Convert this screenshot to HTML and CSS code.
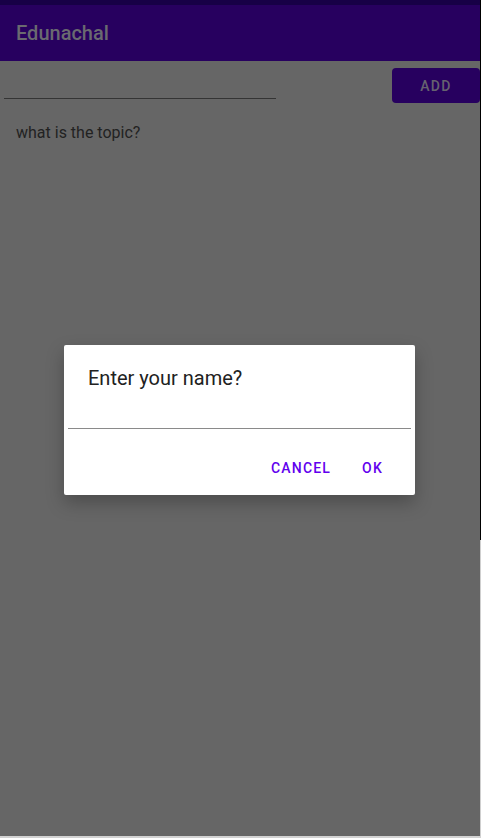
FILE: index.html
```html
<!DOCTYPE html>
<html>
<head>
<meta charset="utf-8">
<link rel="stylesheet" href="styles.css">
</head>
<body>
<div class="frame">
  <div class="screen">
    <div class="statusbar"></div>
    <div class="appbar"><span class="title">Edunachal</span></div>
    <div class="content">
      <div class="row">
        <div class="input"></div>
        <div class="addbtn">ADD</div>
      </div>
      <div class="question">what is the topic?</div>
    </div>
    <div class="dialog">
      <div class="dlg-title">Enter your name?</div>
      <div class="dlg-input"></div>
      <div class="dlg-actions">
        <span class="dlg-btn">CANCEL</span>
        <span class="dlg-btn">OK</span>
      </div>
    </div>
  </div>
  <div class="edge"></div>
</div>
<div class="bottom"></div>
</body>
</html>
```
FILE: styles.css
```css
html, body {
  margin: 0;
  padding: 0;
  background: #d2d2d2;
  font-family: Roboto, "Liberation Sans", sans-serif;
}
.frame {
  display: flex;
  width: 481px;
  height: 836px;
}
.screen {
  position: relative;
  width: 480px;
  height: 836px;
  background: #666666;
  display: flex;
  flex-direction: column;
}
.edge {
  width: 1px;
  height: 836px;
  background: linear-gradient(to bottom, #000 0, #000 540px, #cfcfcf 540px);
}
.bottom {
  height: 2px;
  width: 481px;
  background: #d2d2d2;
}
.statusbar {
  height: 5px;
  background: #170046;
}
.appbar {
  height: 56px;
  background: #27005f;
  display: flex;
  align-items: center;
  padding-left: 16px;
}
.title {
  color: #6a6a70;
  font-size: 20px;
  font-weight: 500;
  margin-top: -1px;
}
.content {
  display: flex;
  flex-direction: column;
}
.row {
  display: flex;
  justify-content: space-between;
  align-items: flex-start;
  padding-top: 7px;
}
.input {
  width: 272px;
  height: 30px;
  margin-left: 4px;
  border-bottom: 1px solid #343434;
}
.addbtn {
  width: 88px;
  height: 35px;
  background: #27005f;
  border-radius: 4px;
  color: #66626f;
  font-size: 14px;
  font-weight: 500;
  letter-spacing: 1.3px;
  display: flex;
  align-items: center;
  justify-content: center;
}
.question {
  margin-top: 20px;
  padding-left: 16px;
  font-size: 16px;
  color: #222222;
}
.dialog {
  position: absolute;
  left: 64px;
  top: 345px;
  width: 351px;
  height: 150px;
  background: #fff;
  border-radius: 2px;
  box-shadow: 0 8px 18px rgba(0,0,0,0.25);
  display: flex;
  flex-direction: column;
}
.dlg-title {
  margin: 21px 0 0 24px;
  font-size: 20px;
  color: #212121;
  line-height: 24px;
}
.dlg-input {
  margin: 0 4px 0 4px;
  height: 38px;
  border-bottom: 1px solid #8a8a8a;
}
.dlg-actions {
  display: flex;
  justify-content: flex-end;
  gap: 31px;
  padding-right: 32px;
  margin-top: 31px;
}
.dlg-btn {
  color: #6200ee;
  font-size: 14px;
  font-weight: 500;
  letter-spacing: 1.2px;
}
```
